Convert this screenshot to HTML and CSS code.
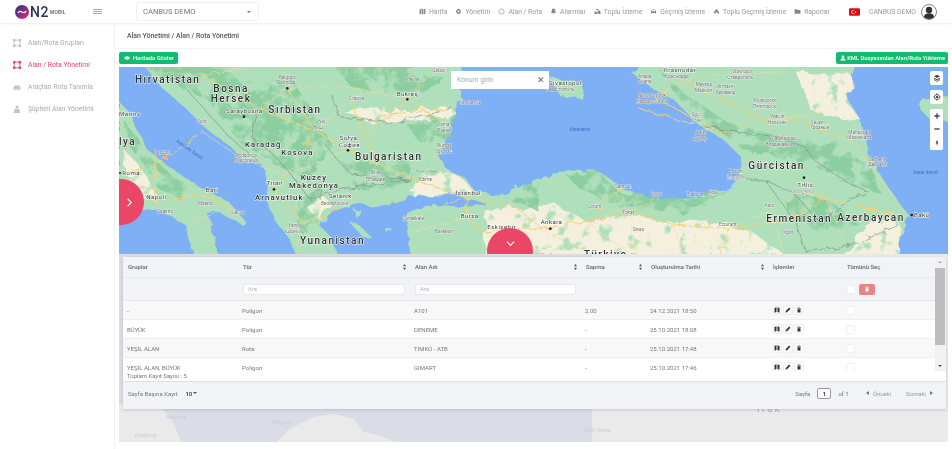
FILE: index.html
```html
<!DOCTYPE html>
<html lang="tr">
<head>
    <meta charset="UTF-8">
    <title>Alan / Rota Yönetimi</title>
    <link rel="stylesheet" href="styles.css">
</head>
<body>
    <!-- small icons used more than once -->
    <svg class="sprite" width="0" height="0">
        <symbol id="i-map" viewBox="0 0 12 12"><path d="M1 2l4-1.500V10l-4 1.500zM7 .5l4 1.500v9.500L7 10z"/></symbol>
        <symbol id="i-pen" viewBox="0 0 12 12"><path d="M1 11l.6-3L8.500 1.100l2.400 2.400L4 10.400z"/></symbol>
        <symbol id="i-trash" viewBox="0 0 12 12"><path d="M2 2.500h8v1H2zM4.500 1h3v1h-3zM3 4.500h6V11H3z"/></symbol>
        <symbol id="i-sort" viewBox="0 0 8 12"><path d="M4 0l3 4.500H1zM4 12L1 7.500h6z"/></symbol>
    </svg>

    <header class="topbar">
        <div class="brand">
            <svg class="brand-mark" viewBox="0 0 14 14">
                <defs>
                    <linearGradient id="brand-grad" x1="0" y1="0" x2="1" y2="1">
                        <stop offset="0" stop-color="#23356f"/>
                        <stop offset=".5" stop-color="#7d2c8c"/>
                        <stop offset="1" stop-color="#ee2f6a"/>
                    </linearGradient>
                </defs>
                <circle cx="7" cy="7" r="7" fill="url(#brand-grad)"/>
                <path d="M3 8c1-2 2.500-2 4-1s3 1 4-1" fill="none" stroke="#fff" stroke-width="1.400"/>
            </svg>
            <span class="brand-n2">N2</span>
            <span class="brand-mobil">MOBIL</span>
        </div>
        <div class="burger"><span></span><span></span><span></span></div>
        <div class="company-select">
            <span>CANBUS DEMO</span>
            <span class="caret"></span>
        </div>
        <nav class="topnav">
            <a class="topnav-item"><svg viewBox="0 0 12 12"><path d="M1 2l3-1v9l-3 1zM5 1l2 1v9l-2-1zM8 2l3-1v9l-3 1z"/></svg>Harita</a>
            <a class="topnav-item"><svg viewBox="0 0 12 12"><path d="M6 1l1 1.300 1.700-.3.300 1.700L10.500 5 10 6l.5 1-1.500 1.300-.3 1.700L7 9.700 6 11l-1-1.300-1.700.3L3 8.300 1.500 7 2 6l-.5-1L3 3.700 3.300 2 5 2.300zM6 4.300a1.700 1.700 0 100 3.400 1.700 1.700 0 000-3.400z"/></svg>Yönetim</a>
            <a class="topnav-item"><svg viewBox="0 0 12 12"><circle cx="6" cy="6" r="4.500" fill="none" stroke="currentColor" stroke-width="1"/></svg>Alan / Rota</a>
            <a class="topnav-item"><svg viewBox="0 0 12 12"><path d="M6 1c2 0 3 1.500 3 3.500 0 2 .5 3 1.500 4h-9c1-1 1.500-2 1.500-4C3 2.500 4 1 6 1zM4.800 9.500h2.400L6 11z"/></svg>Alarmlar</a>
            <a class="topnav-item"><svg viewBox="0 0 14 12"><path d="M1 6h4l1 2v3H1zM8 4h4l1 3v4H7V7zM4 1h4l1 2H4z"/></svg>Toplu İzleme</a>
            <a class="topnav-item"><svg viewBox="0 0 14 12"><path d="M4 2h6l2 4v4h-2V9H4v1H2V6zM4.800 3.200L3.800 5.500h6.400l-1-2.300z"/></svg>Geçmiş İzleme</a>
            <a class="topnav-item"><svg viewBox="0 0 14 12"><path d="M5 2h4l4 8H8.500L8 7H6l-.5 3H1z"/></svg>Toplu Geçmiş İzleme</a>
            <a class="topnav-item"><svg viewBox="0 0 12 12"><path d="M1 2h4l1 1.500h5V10H1z"/></svg>Raporlar</a>
        </nav>
        <div class="user">
            <svg class="flag" viewBox="0 0 10 7"><rect width="10" height="7" rx="1" fill="#e30a17"/><circle cx="3.800" cy="3.500" r="1.700" fill="#fff"/><circle cx="4.200" cy="3.500" r="1.350" fill="#e30a17"/><circle cx="6" cy="3.500" r=".6" fill="#fff"/></svg>
            <span class="user-name">CANBUS DEMO</span>
            <svg class="avatar" viewBox="0 0 16 16"><circle cx="8" cy="8" r="7.500" fill="#fff" stroke="#666" stroke-width=".8"/><circle cx="8" cy="6" r="3.200" fill="#333"/><path d="M2.800 13c.6-2.800 2.500-3.800 5.200-3.800s4.600 1 5.200 3.800A7 7 0 018 15a7 7 0 01-5.200-2z" fill="#333"/></svg>
        </div>
    </header>

    <div class="layout">
        <aside class="sidebar">
            <a class="side-item"><svg viewBox="0 0 10 10"><path d="M1.500 1.500h7v7h-7z" fill="none" stroke="currentColor"/><path d="M0 0h3v3H0zM7 0h3v3H7zM0 7h3v3H0zM7 7h3v3H7z"/></svg>Alan/Rota Grupları</a>
            <a class="side-item active"><svg viewBox="0 0 10 10"><path d="M1.500 1.500h7v7h-7z" fill="none" stroke="currentColor"/><path d="M0 0h3v3H0zM7 0h3v3H7zM0 7h3v3H0zM7 7h3v3H7z"/></svg>Alan / Rota Yönetimi</a>
            <a class="side-item"><svg viewBox="0 0 10 10"><path d="M2 3h6l1.500 3v2h-9V6zM1 9h8v.500H1z"/></svg>Araçtan Rota Tanımla</a>
            <a class="side-item"><svg viewBox="0 0 10 10"><circle cx="5" cy="2.500" r="2"/><path d="M2 5h6l1 5H1z"/></svg>Şüpheli Alan Yönetimi</a>
        </aside>

        <main class="content">
            <div class="breadcrumb">Alan Yönetimi / Alan / Rota Yönetimi</div>
            <div class="actions">
                <button class="btn-green btn-show"><svg viewBox="0 0 14 10"><path d="M7 1c3 0 5.500 2 6.500 4-1 2-3.500 4-6.500 4S1.500 7 .5 5C1.500 3 4 1 7 1z"/></svg>Haritada Göster</button>
                <button class="btn-green"><svg viewBox="0 0 12 12"><circle cx="6" cy="3.500" r="2.700"/><path d="M1 11c0-3 2-4.300 5-4.300s5 1.300 5 4.300z"/></svg>KML Dosyasından Alan/Rota Yükleme</button>
            </div>

            <section class="map">
                <svg class="map-art" viewBox="0 6 2487 561" preserveAspectRatio="none">
                    <defs>
                        <!-- wobble so straight polygon edges read as coastline -->
                        <filter id="rough" x="-2%" y="-5%" width="104%" height="110%">
                            <feTurbulence type="fractalNoise" baseFrequency="0.035" numOctaves="4" seed="7" result="noise"/>
                            <feDisplacementMap in="SourceGraphic" in2="noise" scale="22"/>
                        </filter>
                        <!-- breaks a flat fill into mottled terrain -->
                        <filter id="mottle" x="-2%" y="-5%" width="104%" height="110%">
                            <feTurbulence type="fractalNoise" baseFrequency="0.025" numOctaves="5" seed="11" result="noise"/>
                            <feDisplacementMap in="SourceGraphic" in2="noise" scale="40" result="shape"/>
                            <feColorMatrix in="noise" type="matrix" values="0 0 0 0 0 0 0 0 0 0 0 0 0 0 0 5 0 0 0 -1.800" result="spots"/>
                            <feComposite in="shape" in2="spots" operator="in"/>
                            <feGaussianBlur stdDeviation="2"/>
                        </filter>
                        <filter id="mottle-dry" x="-2%" y="-5%" width="104%" height="110%">
                            <feTurbulence type="fractalNoise" baseFrequency="0.025" numOctaves="5" seed="5" result="noise"/>
                            <feDisplacementMap in="SourceGraphic" in2="noise" scale="40" result="shape"/>
                            <feColorMatrix in="noise" type="matrix" values="0 0 0 0 0 0 0 0 0 0 0 0 0 0 0 6 0 0 0 -1.500" result="spots"/>
                            <feComposite in="shape" in2="spots" operator="in"/>
                            <feGaussianBlur stdDeviation="2"/>
                        </filter>
                    </defs>
                    <rect x="0" y="0" width="2487" height="570" fill="#7fb0f5"/>
                    <g filter="url(#rough)">
                        <path class="land" d="M60 -20L120 60 200 130 260 190 340 250 380 290 430 300 445 340 440 400 470 470 510 520 540 590H660L640 520 600 480 640 440 700 420 780 425 880 395 1000 385 1040 400 1100 412 1050 425 930 420 860 450 880 590H2340L2340 520 2370 450 2330 400 2290 340 2250 270 2220 160 2180 90 2210 -20H1610L1540 25 1600 70 1660 100 1740 180 1820 230 1870 280 1860 340 1840 370 1780 385 1730 400 1610 405 1510 370 1435 315 1320 320 1260 340 1150 390 1070 380 1040 340 980 310 960 270 990 190 1025 100 1030 -20z"/>
                        <path class="land" d="M0 110L30 140 80 250 130 290 200 340 260 375 330 410 380 470 370 480 300 440 260 440 280 480 300 590H230L200 480 130 440 50 430 0 400z"/>
                        <path class="land" d="M1290 40L1390 50 1390 100 1330 100z"/>
                        <path class="land" d="M2410 100H2500V170H2440L2400 130z"/>
                        <path class="land" d="M690 470L720 480 760 520 735 520zM800 490h20v12h-20zM700 430l25 5-10 25z"/>
                    </g>
                    <!-- cream lowland -->
                    <g class="dry" filter="url(#mottle-dry)">
                        <path d="M1100 440L1210 425 1320 425 1400 470 1500 450 1640 470 1780 470 1900 500 2000 570H1100zM900 330L990 320 1040 350 1060 380 1000 385 880 390zM2270 450L2340 470 2340 570H2180zM670 135L1000 130 990 165 760 175zM2030 20L2200 30 2190 120 2230 170 2080 140zM10 250L60 300 120 400 40 400zM560 420L600 380 640 420 600 470z"/>
                    </g>
                    <!-- darker mountain green -->
                    <g class="hill" filter="url(#mottle)">
                        <path d="M640 0L900 0 980 40 900 90 700 70zM860 180L1010 130 1000 220 900 230zM1620 10L1720 160 1830 220 1880 260 1960 270 2080 300 2200 360 2280 380 2260 310 2160 240 2000 220 1840 180 1700 90zM1340 330L1440 320 1500 380 1650 400 1780 390 1840 370 1700 440 1480 420 1380 370zM660 290L860 280 880 350 720 380zM240 70L520 40 640 240 560 340 470 300 360 230zM540 390L610 360 600 470 540 500zM120 310L200 360 180 400 100 360zM2020 380L2140 410 2220 480 2100 500 2000 450zM1260 350L1160 400 1250 430zM60 0L320 0 420 120 250 100zM20 170L90 270 170 340 110 350 30 240z"/>
                    </g>
                    <g filter="url(#rough)">
                        <path class="road" d="M250 30L420 130 590 200 690 255 780 300 900 350 1045 400 1180 420 1270 490 1400 470 1530 440 1660 480 1830 490 2000 470 2120 400 2340 450M505 70L590 200 500 330 465 375 560 480 660 430M865 100L690 255M865 100L1000 190M690 100L780 300M780 150L1000 130M110 270L110 410 260 390 360 450M130 290L20 325M1045 400L1040 460 1100 500 1260 490 1295 490M1690 50L1610 100 1800 200 1980 150 2200 230M1690 50L1950 170M1560 130L1730 180M2050 380L2120 400 2340 450M1510 370L1430 430 1530 440 1610 400M1830 490L1800 570M250 200L130 290"/>
                        <path class="road thin" d="M100 20L250 30 370 10M505 70L640 60 865 100 950 20M390 150L505 70M250 200L380 290 500 330M590 200L760 60M1000 190L955 270 900 350M690 255L500 330M560 480L530 560M660 430L780 300M900 440L1045 400M880 500L1040 460M1100 500L1160 570M1260 490L1400 560M1400 470L1540 570M1530 440L1550 560M1660 480L1690 570M1830 490L1950 440 2050 380M1950 440L2000 570M1800 200L1740 180M2200 230L2250 300 2330 400M2000 20L1800 30 1690 50M1950 170L2120 140M200 480L300 440M40 370L110 410M2120 400L2180 540"/>
                        <path class="border" d="M205 75L330 215 420 290M420 130L395 215 460 265 510 320 570 400 680 370 870 345M640 90L660 155 830 175 1000 130M620 240L660 290 700 330 870 345M870 345L895 320 960 320M1750 180L1900 210 2000 220 2060 250 2090 290 2200 360 2250 380M1880 340L1950 350 2030 390 2100 470 2200 400 2240 385M1940 350L2030 470 2060 560 2200 540 2340 480"/>
                    </g>
                    <!-- labels -->
                    <g class="country">
                        <text x="48" y="53">Hırvatistan</text><text x="283" y="80">Bosna</text><text x="275" y="112">Hersek</text><text x="448" y="143">Sırbistan</text><text x="708" y="285">Bulgaristan</text><text x="543" y="538">Yunanistan</text><text x="0" y="240">lya</text><text x="1888" y="312">Gürcistan</text><text x="1942" y="470">Ermenistan</text><text x="2155" y="467">Azerbaycan</text><text x="1395" y="578">Türkiye</text>
                        <text x="378" y="247" class="small">Karadağ</text><text x="487" y="271" class="small">Kosova</text><text x="545" y="345" class="small">Kuzey</text><text x="510" y="368" class="small">Makedonya</text><text x="408" y="405" class="small">Arnavutluk</text>
                    </g>
                    <g class="city">
                        <text x="322" y="143">Saraybosna</text><text x="833" y="93">Bükreş</text><text x="662" y="225">Sofya</text><text x="660" y="245">София</text><text x="443" y="360">Tiran</text><text x="260" y="380">Bari</text><text x="82" y="403">Napoli</text><text x="10" y="330">Roma</text><text x="1010" y="390">İstanbul</text><text x="1025" y="458">Bursa</text><text x="1105" y="492">Eskişehir</text><text x="630" y="400">Selanik</text><text x="1290" y="60">Sivastopol</text><text x="1635" y="20">Krasnodar</text><text x="1265" y="478">Ankara</text><text x="2035" y="365">Tiflis</text><text x="2385" y="456">Bakü</text><text x="0" y="152">Marino</text>
                    </g>
                    <g class="dots">
                        <circle cx="505" cy="70" r="4"/><circle cx="375" cy="155" r="4"/><circle cx="865" cy="103" r="4"/><circle cx="687" cy="256" r="4"/><circle cx="465" cy="373" r="4"/><circle cx="1294" cy="491" r="4"/><circle cx="2055" cy="338" r="4"/><circle cx="2378" cy="450" r="4"/><circle cx="3" cy="324" r="3"/>
                    </g>
                    <g class="town">
                        <text x="480" y="43">Belgrad</text><text x="475" y="58">Београд</text><text x="860" y="48">Plevne</text><text x="940" y="20">Galaçi</text><text x="690" y="105">Craiova</text><text x="1020" y="118">Konstence</text><text x="955" y="182">Varna</text><text x="955" y="202">Варна</text><text x="955" y="247">Burgaz</text><text x="955" y="263">Бургас</text><text x="598" y="175">Niş</text><text x="582" y="192">Ниш</text><text x="755" y="327">Filibe</text><text x="740" y="347">Пловдив</text><text x="900" y="347">Edirne</text><text x="948" y="503">Balıkesir</text><text x="850" y="465">Çanakkale</text><text x="605" y="420">Θεσσαλονίκη</text><text x="350" y="275">Podgorica</text><text x="345" y="292">Подгорица</text><text x="235" y="175">Split</text><text x="105" y="268">Pescara</text><text x="115" y="445">Salerno</text><text x="237" y="420">Matera</text><text x="340" y="447">Lecce</text><text x="508" y="487">Yanya</text><text x="498" y="503">Ιωάννινα</text>
                        <text x="1280" y="78">Севастополь</text><text x="1638" y="40">Краснодар</text><text x="1840" y="25">Stavropol</text><text x="1825" y="42">Ставрополь</text><text x="1557" y="38">Anapa</text><text x="1557" y="55">Анапа</text><text x="1557" y="97">Novorossiysk</text><text x="1552" y="113">Новороссийск</text><text x="1730" y="64">Maykop</text><text x="1728" y="82">Майкоп</text><text x="1795" y="70">Armavir</text><text x="1790" y="87">Армавир</text><text x="1905" y="110">Pyatigorsk</text><text x="1902" y="130">Пятигорск</text><text x="1718" y="153">Soçi</text><text x="1716" y="170">Сочи</text><text x="1957" y="160">Nalçik</text><text x="1947" y="178">Нальчик</text><text x="2075" y="176">Çeçen</text><text x="2075" y="193">Грозный</text><text x="2188" y="206">Mahaçkale</text><text x="2185" y="222">Махачкала</text><text x="1955" y="224">Vladikavkaz</text><text x="1940" y="242">Владикавказ</text><text x="1730" y="208">Adler</text><text x="1722" y="226">Адлер</text><text x="2250" y="287">Derbent</text><text x="2248" y="303">Дербент</text><text x="1830" y="323">Batum</text><text x="1825" y="342">ბათუმი</text><text x="2015" y="383">თბილისი</text><text x="1488" y="368">Samsun</text><text x="1597" y="393">Ordu</text><text x="1703" y="392">Trabzon</text><text x="1767" y="388">Rize</text><text x="1405" y="430">Çorum</text><text x="1510" y="448">Tokat</text><text x="1542" y="497">Sivas</text><text x="1937" y="425">Kars</text><text x="1800" y="483">Erzurum</text><text x="1995" y="507">Iğdır</text>
                    </g>
                    <g class="water">
                        <text x="1352" y="197">Karadeniz</text><text x="2382" y="326">Xəzər dənizi</text><text x="170" y="230" transform="rotate(35 170 230)">Adriyatik Denizi</text>
                    </g>
                </svg>

                <div class="search-box">
                    <span>Konum girin</span>
                    <span class="search-x">✕</span>
                </div>

                <div class="map-tools">
                    <button class="tool"><svg viewBox="0 0 12 12"><path d="M6 1l4.500 2.500L6 6 1.500 3.500zM1.500 5.500L6 8l4.500-2.500V7L6 9.500 1.500 7zM1.500 8L6 10.500 10.500 8v1L6 11.500 1.500 9z"/></svg></button>
                    <button class="tool"><svg viewBox="0 0 12 12"><circle cx="6" cy="6" r="3.800" fill="none" stroke="currentColor" stroke-width="1.300"/><circle cx="6" cy="6" r="1.800"/><path d="M5.500 0h1v2h-1zM5.500 10h1v2h-1zM0 5.500h2v1H0zM10 5.500h2v1h-2z"/></svg></button>
                    <div class="tool-group">
                        <button class="tool"><svg viewBox="0 0 12 12"><path d="M5 2h2v3h3v2H7v3H5V7H2V5h3z"/></svg></button>
                        <button class="tool"><svg viewBox="0 0 12 12"><path d="M2 5h8v2H2z"/></svg></button>
                        <button class="tool"><svg viewBox="0 0 12 12"><path d="M6 1L8 7H4z" fill="#444"/><path d="M6 11L4 7h4z" fill="#bbb"/></svg></button>
                    </div>
                </div>

                <button class="round-toggle toggle-side"><svg viewBox="0 0 10 10"><path d="M3 1l4 4-4 4" fill="none" stroke="#fff" stroke-width="1.300"/></svg></button>
                <button class="round-toggle toggle-down"><svg viewBox="0 0 10 10"><path d="M1 3l4 4 4-4" fill="none" stroke="#fff" stroke-width="1.300"/></svg></button>
            </section>

            <section class="grid-area">
                <!-- rest of the map, washed out behind the panel -->
                <svg class="faded-map" viewBox="0 0 829 188">
                    <path d="M0 150H40L55 170 62 188H0zM158 188L170 175 195 163 215 160 235 165 245 178 265 183 275 188zM473 0H829V188H473z"/>
                    <text x="47" y="165">Misrata</text>
                    <text x="153" y="170">Bingazi</text>
                    <text x="466" y="178">Batı Şeria</text>
                    <text x="16" y="183">mapbox</text>
                </svg>
                <div class="grid-panel">
                    <div class="grid-head">
                        <div class="grid-scroll">
                            <table class="grid">
                                <colgroup>
                                    <col class="col-group"><col class="col-type"><col class="col-name"><col class="col-dev"><col class="col-date"><col class="col-ops"><col class="col-sel">
                                </colgroup>
                                <thead>
                                    <tr class="row-head">
                                        <th>Gruplar</th>
                                        <th>Tür<svg class="sort"><use href="#i-sort"/></svg></th>
                                        <th>Alan Adı<svg class="sort"><use href="#i-sort"/></svg></th>
                                        <th>Sapma<svg class="sort"><use href="#i-sort"/></svg></th>
                                        <th>Oluşturulma Tarihi<svg class="sort"><use href="#i-sort"/></svg></th>
                                        <th>İşlemler</th>
                                        <th>Tümünü Seç</th>
                                    </tr>
                                    <tr class="row-filter">
                                        <th></th>
                                        <th><input class="filter-input" placeholder="Ara"></th>
                                        <th><input class="filter-input" placeholder="Ara"></th>
                                        <th></th>
                                        <th></th>
                                        <th></th>
                                        <th>
                                            <div class="select-all">
                                                <span class="check"></span>
                                                <span class="btn-delete"><svg><use href="#i-trash"/></svg></span>
                                            </div>
                                        </th>
                                    </tr>
                                </thead>
                                <tbody>
                                    <tr>
                                        <td>-</td><td>Poligon</td><td>A101</td><td>2.00</td><td>24.12.2021 18:50</td>
                                        <td><div class="ops"><span class="op"><svg><use href="#i-map"/></svg></span><span class="op"><svg><use href="#i-pen"/></svg></span><span class="op"><svg><use href="#i-trash"/></svg></span></div></td>
                                        <td><span class="check"></span></td>
                                    </tr>
                                    <tr>
                                        <td>BÜYÜK</td><td>Poligon</td><td>DENEME</td><td>-</td><td>25.10.2021 18:08</td>
                                        <td><div class="ops"><span class="op"><svg><use href="#i-map"/></svg></span><span class="op"><svg><use href="#i-pen"/></svg></span><span class="op"><svg><use href="#i-trash"/></svg></span></div></td>
                                        <td><span class="check"></span></td>
                                    </tr>
                                    <tr>
                                        <td>YEŞİL ALAN</td><td>Rota</td><td>TIMKO - ATB</td><td>-</td><td>25.10.2021 17:48</td>
                                        <td><div class="ops"><span class="op"><svg><use href="#i-map"/></svg></span><span class="op"><svg><use href="#i-pen"/></svg></span><span class="op"><svg><use href="#i-trash"/></svg></span></div></td>
                                        <td><span class="check"></span></td>
                                    </tr>
                                    <tr>
                                        <td>YEŞİL ALAN, BÜYÜK</td><td>Poligon</td><td>GIMART</td><td>-</td><td>25.10.2021 17:46</td>
                                        <td><div class="ops"><span class="op"><svg><use href="#i-map"/></svg></span><span class="op"><svg><use href="#i-pen"/></svg></span><span class="op"><svg><use href="#i-trash"/></svg></span></div></td>
                                        <td><span class="check"></span></td>
                                    </tr>
                                </tbody>
                            </table>
                        </div>
                        <div class="scrollbar">
                            <span class="scroll-up"></span>
                            <span class="scroll-thumb"></span>
                            <span class="scroll-down"></span>
                        </div>
                    </div>
                    <div class="grid-total">Toplam Kayıt Sayısı : 5</div>
                    <div class="grid-footer">
                        <div class="page-size">
                            <span>Sayfa Başına Kayıt</span>
                            <b>10</b><span class="size-caret"></span>
                        </div>
                        <div class="pager">
                            <span>Sayfa</span>
                            <span class="page-input">1</span>
                            <span>of 1</span>
                            <span class="page-link prev">Önceki</span>
                            <span class="page-link next">Sonraki</span>
                        </div>
                    </div>
                </div>
                <span class="ghost-label">Irak</span>
            </section>
        </main>
    </div>
</body>
</html>
```

FILE: styles.css
```css
* {
    margin: 0;
    padding: 0;
    box-sizing: border-box;
    font-family: 'Roboto', 'Liberation Sans', sans-serif;
}

html, body {
    width: 100%;
    height: 100%;
    overflow: hidden;
}

body {
    background: #fff;
    color: #666;
    display: flex;
    flex-direction: column;
    font-size: 6.5px;
    filter: blur(0.3px);
}

svg {
    fill: currentColor;
}

.sprite {
    position: absolute;
}

/* Top bar */
.topbar {
    height: 24px;
    flex: none;
    display: flex;
    align-items: center;
    border-bottom: 1px solid #f1f1f3;
    box-shadow: 0 1px 2px rgba(0, 0, 0, 0.03);
}

.brand {
    width: 93px;
    padding-left: 15px;
    display: flex;
    align-items: center;
}

.brand-mark {
    width: 14px;
    height: 14px;
    flex: none;
}

.brand-n2 {
    font-size: 14px;
    font-weight: 500;
    letter-spacing: 0.5px;
    color: #2b3356;
    margin-left: 1px;
    line-height: 1;
}

.brand-mobil {
    font-size: 4.800px;
    font-weight: 500;
    color: #555;
    margin-left: 1px;
    letter-spacing: 0.3px;
    padding-top: 2px;
}

.burger {
    width: 9px;
    display: flex;
    flex-direction: column;
    gap: 1px;
}

.burger span {
    height: 1px;
    background: #aaa;
}

.company-select {
    width: 123px;
    height: 19px;
    margin-left: 34px;
    padding: 0 7px 0 6px;
    border: 1px solid #f0f0f2;
    border-radius: 3px;
    display: flex;
    align-items: center;
    justify-content: space-between;
    font-size: 7.600px;
    color: #777;
}

.caret {
    border-left: 2.500px solid transparent;
    border-right: 2.500px solid transparent;
    border-top: 2.500px solid #777;
}

.topnav {
    margin-left: 160px;
    width: 412px;
    height: 22px;
    display: flex;
    align-items: center;
    gap: 8px;
}

.topnav-item {
    display: flex;
    align-items: center;
    gap: 3px;
    font-size: 6.800px;
    color: #999;
    white-space: nowrap;
}

.topnav-item svg {
    height: 7px;
    width: 7px;
    color: #888;
}

.user {
    margin-left: 18px;
    display: flex;
    align-items: center;
}

.flag {
    width: 11px;
    height: 8px;
}

.user-name {
    margin-left: 9px;
    font-size: 6.800px;
    color: #999;
    white-space: nowrap;
}

.avatar {
    width: 16px;
    height: 16px;
    margin-left: 5px;
}

/* Sidebar and content */
.layout {
    flex: 1;
    display: flex;
    min-height: 0;
}

.sidebar {
    width: 115px;
    flex: none;
    border-right: 1px solid #f0f0f2;
    padding-top: 8px;
}

.side-item {
    height: 22px;
    padding-left: 13px;
    display: flex;
    align-items: center;
    gap: 7px;
    font-size: 6.800px;
    color: #aaa;
}

.side-item svg {
    width: 8px;
    height: 8px;
    color: #c4c4c4;
}

.side-item.active,
.side-item.active svg {
    color: #e8466c;
}

.content {
    flex: 1;
    min-width: 0;
    padding: 0 4px;
    display: flex;
    flex-direction: column;
}

.breadcrumb {
    height: 25px;
    margin: 0 -4px;
    padding: 8px 0 0 12px;
    border-bottom: 1px solid #f3f3f5;
    font-size: 6.900px;
    font-weight: 500;
    color: #555;
}

.actions {
    height: 18px;
    padding-top: 3px;
    display: flex;
    justify-content: space-between;
}

.btn-green {
    height: 12px;
    padding: 0 3px 0 4px;
    border: none;
    border-radius: 2px;
    background: #13bb70;
    color: #fff;
    display: flex;
    align-items: center;
    gap: 1px;
    font-size: 5.800px;
    font-weight: 500;
}

.btn-show {
    padding: 0 4px 0 5px;
    gap: 3px;
}

.btn-green svg {
    width: 6px;
    height: 6px;
}

/* Map */
.map {
    height: 187px;
    flex: none;
    position: relative;
    overflow: hidden;
}

.map-art {
    display: block;
    width: 100%;
    height: 100%;
}

.land {
    fill: #b0dfbc;
}

.dry {
    fill: #f5f0de;
}

.hill {
    fill: #85cb9b;
    opacity: 0.8;
}

.road {
    fill: none;
    stroke: #f8d072;
    stroke-width: 3;
}

.road.thin {
    stroke: #f6dc9a;
    stroke-width: 1.800;
}

.border {
    fill: none;
    stroke: #7d8c85;
    stroke-width: 2;
}

.dots {
    fill: #222;
}

.country text {
    font-size: 30px;
    font-weight: 500;
    letter-spacing: 4.500px;
    fill: #2a2a2a;
    stroke: #fff;
    stroke-width: 3px;
    paint-order: stroke;
}

.country .small {
    font-size: 23px;
    letter-spacing: 3.500px;
}

.city text {
    font-size: 18px;
    letter-spacing: 1.500px;
    fill: #333;
    stroke: #fff;
    stroke-width: 3px;
    paint-order: stroke;
}

.town text {
    font-size: 14px;
    fill: #666;
    stroke: #fff;
    stroke-width: 2px;
    paint-order: stroke;
}

.water text {
    font-size: 14px;
    fill: #3a6fc4;
}

.search-box {
    position: absolute;
    left: 332px;
    top: 4px;
    width: 98px;
    height: 18px;
    padding: 0 4px 0 6px;
    background: #fff;
    display: flex;
    align-items: center;
    justify-content: space-between;
    font-size: 6.800px;
    color: #aaa;
}

.search-x {
    font-size: 9px;
    color: #666;
}

.map-tools {
    position: absolute;
    top: 4px;
    right: 5px;
    display: flex;
    flex-direction: column;
    gap: 5px;
}

.tool {
    width: 13px;
    height: 14px;
    border: none;
    border-radius: 2px;
    background: #fff;
    display: flex;
    align-items: center;
    justify-content: center;
    color: #444;
}

.tool-group .tool {
    height: 13.500px;
}

.tool svg {
    width: 8px;
    height: 8px;
}

.tool-group {
    border-radius: 2px;
    background: #fff;
}

.round-toggle {
    position: absolute;
    width: 46px;
    height: 46px;
    border: none;
    border-radius: 50%;
    background: #ea4766;
    display: flex;
    align-items: center;
    justify-content: center;
}

.round-toggle svg {
    width: 9px;
    height: 9px;
}

.toggle-side {
    left: -21px;
    top: 112px;
    padding-left: 16px;
}

.toggle-down {
    left: 368px;
    top: 161px;
    padding-bottom: 16px;
}

/* Grid panel */
.grid-area {
    height: 188px;
    flex: none;
    padding: 3px 2px 0 4px;
    background: #dadde6;
    position: relative;
    overflow: hidden;
}

.faded-map {
    position: absolute;
    left: 0;
    top: 0;
    width: 100%;
    height: 100%;
    fill: #eaeaea;
}

.faded-map text {
    font-size: 6px;
    fill: #ccced6;
}

.ghost-label {
    position: absolute;
    left: 638px;
    top: 149px;
    font-size: 10px;
    font-weight: 500;
    letter-spacing: 2px;
    color: #bcbcbc;
}

.grid-panel {
    height: 152px;
    background: #f2f3f7;
    box-shadow: 0 1px 3px rgba(0, 0, 0, 0.15);
    position: relative;
    z-index: 1;
}

.grid-head {
    display: flex;
    height: 114px;
}

.grid-scroll {
    width: 812px;
    flex: none;
    overflow: hidden;
}

.grid {
    width: 812px;
    table-layout: fixed;
    border-collapse: separate;
    border-spacing: 0;
    font-size: 6px;
}

.col-group { width: 115px; }
.col-type { width: 172px; }
.col-name { width: 171px; }
.col-dev { width: 65px; }
.col-date { width: 122px; }
.col-ops { width: 74px; }
.col-sel { width: 93px; }

.grid th {
    text-align: left;
    font-weight: 500;
    color: #666;
    padding: 0 5px;
    position: relative;
}

.row-head th {
    height: 21px;
    padding-bottom: 1px;
    border-bottom: 1px solid #e9eaee;
}

.row-filter th {
    height: 23px;
    border-bottom: 1px solid #e4e5e9;
}

.sort {
    position: absolute;
    right: 3px;
    top: 7px;
    width: 5px;
    height: 6px;
    color: #555;
}

.filter-input {
    display: block;
    width: 100%;
    height: 11px;
    padding-left: 4px;
    border: 1px solid #e8e8ea;
    border-radius: 2px;
    background: #fff;
    font-size: 5.800px;
    outline: none;
}

.filter-input::placeholder {
    color: #b5b5b5;
}

.grid td {
    height: 19px;
    padding: 0 4px;
    border-bottom: 1px solid #eceef0;
    background: #fff;
    color: #777;
    white-space: nowrap;
    overflow: hidden;
}

.grid tbody tr:nth-child(odd) td {
    background: #f8f8f8;
}

.select-all {
    display: flex;
    align-items: center;
    gap: 3px;
}

.check {
    display: block;
    width: 9px;
    height: 9px;
    border: 1px solid #efeff1;
    border-radius: 2px;
    background: #fff;
}

.btn-delete {
    width: 16px;
    height: 11px;
    border-radius: 2px;
    background: #e58585;
    color: #fff;
    display: flex;
    align-items: center;
    justify-content: center;
}

.btn-delete svg {
    width: 6px;
    height: 6px;
}

.ops {
    display: flex;
    gap: 1px;
}

.op {
    width: 10px;
    height: 10px;
    border: 1px solid #efefef;
    border-radius: 2px;
    background: #fbfbfb;
    color: #333;
    display: flex;
    align-items: center;
    justify-content: center;
}

.op svg {
    width: 6px;
    height: 6px;
}

.scrollbar {
    width: 10px;
    flex: none;
    background: #f1f1f1;
    display: flex;
    flex-direction: column;
    align-items: center;
}

.scroll-up,
.scroll-down {
    flex: none;
    margin: 4px 0;
    border-left: 2px solid transparent;
    border-right: 2px solid transparent;
}

.scroll-up {
    border-bottom: 2px solid #aaa;
}

.scroll-down {
    margin-top: auto;
    border-top: 2px solid #555;
}

.scroll-thumb {
    width: 100%;
    height: 77px;
    margin-top: 1px;
    background: #bdbdbd;
}

.grid-total {
    height: 11px;
    padding-left: 4px;
    background: #fff;
    border-bottom: 1px solid #dfe1e6;
    font-size: 6px;
    line-height: 10px;
    color: #777;
}

.grid-footer {
    height: 27px;
    padding: 0 13px 5px 5px;
    display: flex;
    align-items: center;
    justify-content: space-between;
    font-size: 6px;
    color: #777;
}

.page-size {
    display: flex;
    align-items: center;
}

.page-size b {
    margin-left: 8px;
    font-weight: 700;
    color: #555;
}

.size-caret {
    margin-left: 1px;
    border-left: 2px solid transparent;
    border-right: 2px solid transparent;
    border-top: 2.500px solid #555;
}

.pager {
    display: flex;
    align-items: center;
    gap: 7px;
}

.page-input {
    width: 14px;
    height: 11px;
    border: 1px solid #999;
    border-radius: 2px;
    background: #fff;
    color: #333;
    font-weight: 700;
    text-align: center;
    line-height: 9px;
}

.page-link {
    display: flex;
    align-items: center;
    gap: 4px;
    color: #999;
}

.prev {
    margin-left: 10px;
}

.next {
    margin-left: 8px;
}

.prev::before {
    content: "";
    border-top: 2.500px solid transparent;
    border-bottom: 2.500px solid transparent;
    border-right: 3px solid #777;
}

.next::after {
    content: "";
    border-top: 2.500px solid transparent;
    border-bottom: 2.500px solid transparent;
    border-left: 3px solid #777;
}
```
